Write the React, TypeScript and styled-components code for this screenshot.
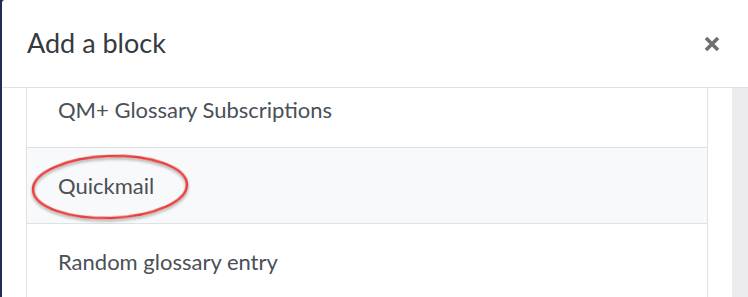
import React from "react";
import styled, { createGlobalStyle } from "styled-components";

const GlobalStyle = createGlobalStyle`
    html, body {
        margin: 0;
        padding: 0;
        width: 748px;
        height: 297px;
        overflow: hidden;
        background-color: #1f2f52;
    }
    #root {
        height: 100%;
    }
`;

const Modal = styled.div`
    height: 297px;
    margin-left: 2px;
    background-color: #ffffff;
    border-top-left-radius: 3px;
    display: flex;
    flex-direction: column;
    font-family: Lato, "Liberation Sans", sans-serif;
    position: relative;
`;

const Header = styled.div`
    height: 87px;
    flex-shrink: 0;
    display: flex;
    align-items: center;
    justify-content: space-between;
    padding: 0 26px 0 25px;
    border-bottom: 1px solid #dee2e6;
`;

const Title = styled.h5`
    margin: 0;
    padding-bottom: 2px;
    font-size: 27px;
    font-weight: 400;
    color: #343a40;
`;

const Close = styled.button`
    border: none;
    background: none;
    padding: 0;
    width: 20px;
    height: 20px;
    display: flex;
    align-items: center;
    justify-content: center;
    color: #6f6f6f;
    cursor: pointer;
`;

const Body = styled.div`
    flex: 1;
    display: flex;
    overflow: hidden;
`;

const ListArea = styled.div`
    flex: 1;
    padding: 0 24px 0 24px;
    overflow: hidden;
`;

const List = styled.ul`
    list-style: none;
    margin: -17px 0 0 0;
    padding: 0;
    border-left: 1px solid #dee2e6;
    border-right: 1px solid #dee2e6;
`;

const Row = styled.li<{ $active?: boolean }>`
    height: 75px;
    display: flex;
    align-items: center;
    padding-left: 31px;
    border-top: 1px solid #dee2e6;
    background-color: ${(p) => (p.$active ? "#f8f9fa" : "#ffffff")};
    font-size: 22px;
    color: #495057;
`;

const Track = styled.div`
    width: 16px;
    flex-shrink: 0;
    background-color: #ececef;
`;

const Mark = styled.svg`
    position: absolute;
    left: 26px;
    top: 150px;
    pointer-events: none;
`;

const blocks = ["Navigation", "QM+ Glossary Subscriptions", "Quickmail", "Random glossary entry"];

export default function App() {
    return (
        <>
            <GlobalStyle />
            <Modal>
                <Header>
                    <Title>Add a block</Title>
                    <Close aria-label="Close">
                        <svg width="16" height="16" viewBox="0 0 16 16">
                            <path d="M2 2 L14 14 M14 2 L2 14" stroke="currentColor" strokeWidth="3.6" strokeLinecap="butt" />
                        </svg>
                    </Close>
                </Header>
                <Body>
                    <ListArea>
                        <List>
                            {blocks.slice(1).map((b) => (
                                <Row key={b} $active={b === "Quickmail"}>
                                    {b}
                                </Row>
                            ))}
                        </List>
                    </ListArea>
                    <Track />
                </Body>
                <Mark width="172" height="80" viewBox="0 0 172 80">
                    <defs>
                        <filter id="shadow" x="-10%" y="-20%" width="120%" height="150%">
                            <feDropShadow dx="0" dy="2" stdDeviation="1.5" floodColor="#000" floodOpacity="0.35" />
                        </filter>
                    </defs>
                    <ellipse cx="82" cy="37" rx="77" ry="31" fill="none" stroke="#e5403d" strokeWidth="2.5"
                        transform="rotate(-2 82 37)" filter="url(#shadow)" />
                </Mark>
            </Modal>
        </>
    );
}
